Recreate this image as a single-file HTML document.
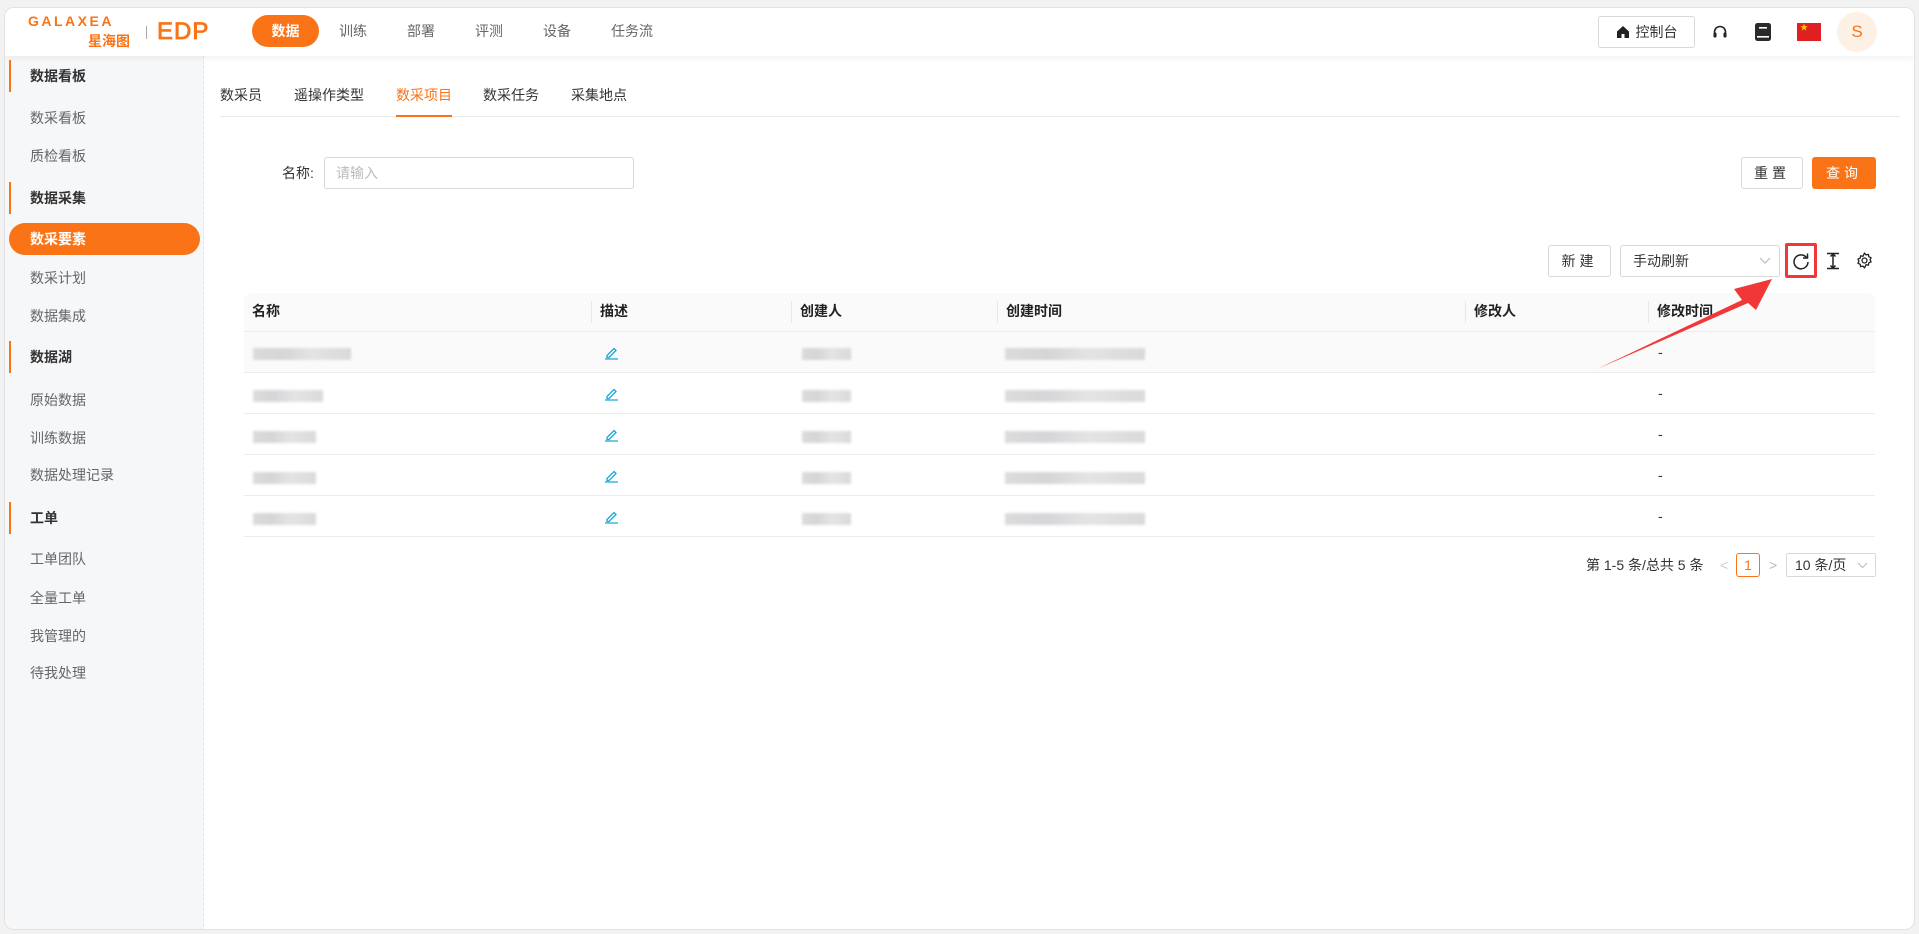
<!DOCTYPE html>
<html><head><meta charset="utf-8"><style>
*{box-sizing:border-box;margin:0;padding:0}
body{width:1919px;height:934px;background:#f2f2f2;font-family:"Liberation Sans","Noto Sans CJK SC",sans-serif;font-size:14px;color:#333;position:relative;overflow:hidden}
.abs{position:absolute}
.card{position:absolute;left:4px;top:7px;width:1911px;height:923px;background:#fff;border-radius:10px;border:1px solid #e2e2e2;overflow:hidden}
.hdr{position:absolute;left:0;top:0;width:100%;height:48px;background:#fff;box-shadow:0 2px 6px rgba(0,0,0,.06);z-index:2}
.side{position:absolute;left:0;top:48px;width:199px;height:880px;background:#f6f7f9;border-right:1px dashed #e4e6ea}
.t{position:absolute;white-space:nowrap;line-height:20px}
.sec{font-weight:bold;color:#333}
.sec::before{content:"";position:absolute;left:-21px;top:-6px;width:2px;height:32px;background:#fa7317}
.it{color:#666}
.btn{position:absolute;border:1px solid #d9d9d9;border-radius:3px;background:#fff;text-align:center;color:#333;font-size:14px}
.th{position:absolute;font-weight:bold;color:#222;top:301px}
.blur{position:absolute;background:linear-gradient(90deg,#d6d6d8,#cfcfd2 30%,#e0e0e2 60%,#d4d4d6);filter:blur(1.2px);height:12px;opacity:.85}
.hl{position:absolute;height:1px;background:#ececec;left:244px;width:1631px}
.vd{position:absolute;width:1px;height:22px;background:#e8e8e8;top:301px}
</style></head><body>
<div class="card">
<div class="hdr">
 <div class="t" style="left:23px;top:3px;font-size:14px;font-weight:bold;color:#fa7317;letter-spacing:2.5px">GALAXEA</div>
 <div class="t" style="left:83px;top:25px;font-size:14px;font-weight:bold;color:#fa7317;line-height:16px">星海图</div>
 <div class="abs" style="left:141px;top:18px;width:1px;height:13px;background:#aaa"></div>
 <div class="t" style="left:152px;top:12px;font-size:24px;color:#fa7317;line-height:24px;letter-spacing:1px;-webkit-text-stroke:0.8px #fa7317">EDP</div>
 <div class="abs" style="left:247px;top:7px;width:67px;height:32px;border-radius:16px;background:#fa7317;color:#fff;text-align:center;line-height:32px;font-weight:bold">数据</div>
 <div class="t" style="left:334px;top:13px;color:#666">训练</div>
 <div class="t" style="left:402px;top:13px;color:#666">部署</div>
 <div class="t" style="left:470px;top:13px;color:#666">评测</div>
 <div class="t" style="left:538px;top:13px;color:#666">设备</div>
 <div class="t" style="left:606px;top:13px;color:#666">任务流</div>
 <div class="btn" style="left:1593px;top:8px;width:97px;height:32px;line-height:30px"><svg width="14" height="14" viewBox="0 0 14 14" style="vertical-align:-2px;margin-right:6px"><path d="M7 1L1 6.5V13H5.5V9H8.5V13H13V6.5Z" fill="#222"/></svg>控制台</div>
 <svg class="abs" style="left:1707px;top:16px" width="16" height="16" viewBox="0 0 16 16"><path d="M2.5 10V8a5.5 5.5 0 0 1 11 0v2" fill="none" stroke="#222" stroke-width="1.6"/><rect x="1.5" y="8.5" width="3" height="5" rx="1" fill="#222"/><rect x="11.5" y="8.5" width="3" height="5" rx="1" fill="#222"/></svg>
 <svg class="abs" style="left:1749px;top:14px" width="18" height="20" viewBox="0 0 18 20"><rect x="1" y="1" width="16" height="18" rx="2.5" fill="#2a2a2a"/><rect x="5" y="5" width="8" height="1.6" fill="#fff"/><rect x="3" y="14" width="12" height="1.6" fill="#fff"/></svg>
 <div class="abs" style="left:1792px;top:15px;width:24px;height:18px;background:#e02020"><div class="abs" style="left:3px;top:1px;color:#ffd200;font-size:8px;line-height:8px">★</div></div>
 <div class="abs" style="left:1832px;top:4px;width:40px;height:40px;border-radius:50%;background:#fdf0e4;color:#fa7317;text-align:center;line-height:40px;font-size:17px">S</div>
</div>
<div class="side">
 <div class="t sec" style="left:25px;top:10px">数据看板</div>
 <div class="t it" style="left:25px;top:52px">数采看板</div>
 <div class="t it" style="left:25px;top:90px">质检看板</div>
 <div class="t sec" style="left:25px;top:132px">数据采集</div>
 <div class="abs" style="left:4px;top:167px;width:191px;height:32px;border-radius:16px;background:#fa7317"></div>
 <div class="t" style="left:25px;top:173px;color:#fff;font-weight:bold">数采要素</div>
 <div class="t it" style="left:25px;top:212px">数采计划</div>
 <div class="t it" style="left:25px;top:250px">数据集成</div>
 <div class="t sec" style="left:25px;top:291px">数据湖</div>
 <div class="t it" style="left:25px;top:334px">原始数据</div>
 <div class="t it" style="left:25px;top:372px">训练数据</div>
 <div class="t it" style="left:25px;top:409px">数据处理记录</div>
 <div class="t sec" style="left:25px;top:452px">工单</div>
 <div class="t it" style="left:25px;top:493px">工单团队</div>
 <div class="t it" style="left:25px;top:532px">全量工单</div>
 <div class="t it" style="left:25px;top:570px">我管理的</div>
 <div class="t it" style="left:25px;top:607px">待我处理</div>
</div>
</div>
<!-- tabs -->
<div class="t" style="left:220px;top:85px">数采员</div>
<div class="t" style="left:294px;top:85px">遥操作类型</div>
<div class="t" style="left:396px;top:85px;color:#fa7317">数采项目</div>
<div class="t" style="left:483px;top:85px">数采任务</div>
<div class="t" style="left:571px;top:85px">采集地点</div>
<div class="abs" style="left:220px;top:116px;width:1680px;height:1px;background:#eaeaea"></div>
<div class="abs" style="left:396px;top:115px;width:56px;height:2px;background:#fa7317"></div>
<!-- search -->
<div class="t" style="left:282px;top:163px">名称:</div>
<div class="abs" style="left:324px;top:157px;width:310px;height:32px;border:1px solid #d9d9d9;border-radius:3px;color:#bbb;padding-left:11px;line-height:30px">请输入</div>
<div class="btn" style="left:1741px;top:157px;width:62px;height:32px;line-height:30px;letter-spacing:4px">重置</div>
<div class="abs" style="left:1812px;top:157px;width:64px;height:32px;border-radius:3px;background:#fa7317;color:#fff;text-align:center;line-height:32px;letter-spacing:4px">查询</div>
<!-- toolbar -->
<div class="btn" style="left:1548px;top:245px;width:63px;height:32px;line-height:30px;letter-spacing:4px">新建</div>
<div class="btn" style="left:1620px;top:245px;width:160px;height:32px;line-height:30px;text-align:left;padding-left:12px">手动刷新<svg class="abs" style="left:138px;top:11px" width="12" height="8" viewBox="0 0 12 8"><path d="M1 1l5 5 5-5" fill="none" stroke="#bbb" stroke-width="1.2"/></svg></div>
<div class="abs" style="left:1785px;top:243px;width:32px;height:35px;border:3px solid #f03838;border-radius:2px"></div>
<svg class="abs" style="left:1792px;top:252px" width="18" height="18" viewBox="0 0 18 18"><path d="M14.5 5.5A7 7 0 1 0 16 10" fill="none" stroke="#222" stroke-width="1.5"/><path d="M15.5 1.5v4.5h-4.5" fill="none" stroke="#222" stroke-width="1.5"/></svg>
<svg class="abs" style="left:1826px;top:252px" width="14" height="18" viewBox="0 0 14 18"><path d="M1 1.5h12M1 16.5h12M7 2v14M4.5 4.5L7 2l2.5 2.5M4.5 13.5L7 16l2.5-2.5" fill="none" stroke="#222" stroke-width="1.5"/></svg>
<svg class="abs" style="left:1856px;top:252px" width="17" height="17" viewBox="0 0 24 24"><path d="M12 1.5l2.2 2.6 3.3-.8.6 3.4 3.2 1.3-1.5 3 1.5 3-3.2 1.3-.6 3.4-3.3-.8L12 22.5l-2.2-2.6-3.3.8-.6-3.4L2.7 16l1.5-3-1.5-3 3.2-1.3.6-3.4 3.3.8z" fill="none" stroke="#222" stroke-width="1.8" stroke-linejoin="round"/><circle cx="12" cy="12" r="3.5" fill="none" stroke="#222" stroke-width="1.8"/></svg>
<!-- table -->
<div class="abs" style="left:244px;top:293px;width:1631px;height:80px;background:#fafafa;border-radius:8px 8px 0 0"></div>
<div class="hl" style="top:331px"></div><div class="hl" style="top:372px"></div><div class="hl" style="top:413px"></div><div class="hl" style="top:454px"></div><div class="hl" style="top:495px"></div><div class="hl" style="top:536px"></div>
<div class="vd" style="left:591px"></div><div class="vd" style="left:791px"></div><div class="vd" style="left:997px"></div><div class="vd" style="left:1465px"></div><div class="vd" style="left:1648px"></div>
<div class="th" style="left:252px">名称</div><div class="th" style="left:600px">描述</div><div class="th" style="left:800px">创建人</div><div class="th" style="left:1006px">创建时间</div><div class="th" style="left:1474px">修改人</div><div class="th" style="left:1657px">修改时间</div>
<div class="blur" style="left:253px;top:348px;width:98px"></div>
<div class="blur" style="left:253px;top:390px;width:70px"></div>
<div class="blur" style="left:253px;top:431px;width:63px"></div>
<div class="blur" style="left:253px;top:472px;width:63px"></div>
<div class="blur" style="left:253px;top:513px;width:63px"></div>
<div class="blur" style="left:802px;top:348px;width:49px"></div><div class="blur" style="left:802px;top:390px;width:49px"></div><div class="blur" style="left:802px;top:431px;width:49px"></div><div class="blur" style="left:802px;top:472px;width:49px"></div><div class="blur" style="left:802px;top:513px;width:49px"></div>
<div class="blur" style="left:1005px;top:348px;width:140px"></div><div class="blur" style="left:1005px;top:390px;width:140px"></div><div class="blur" style="left:1005px;top:431px;width:140px"></div><div class="blur" style="left:1005px;top:472px;width:140px"></div><div class="blur" style="left:1005px;top:513px;width:140px"></div>
<svg class="abs" style="left:604px;top:345px" width="15" height="15" viewBox="0 0 15 15"><path d="M3 10.5l7-7 2 2-7 7H3z M1 14h13" fill="none" stroke="#1aa6d6" stroke-width="1.3"/></svg>
<svg class="abs" style="left:604px;top:386px" width="15" height="15" viewBox="0 0 15 15"><path d="M3 10.5l7-7 2 2-7 7H3z M1 14h13" fill="none" stroke="#1aa6d6" stroke-width="1.3"/></svg>
<svg class="abs" style="left:604px;top:427px" width="15" height="15" viewBox="0 0 15 15"><path d="M3 10.5l7-7 2 2-7 7H3z M1 14h13" fill="none" stroke="#1aa6d6" stroke-width="1.3"/></svg>
<svg class="abs" style="left:604px;top:468px" width="15" height="15" viewBox="0 0 15 15"><path d="M3 10.5l7-7 2 2-7 7H3z M1 14h13" fill="none" stroke="#1aa6d6" stroke-width="1.3"/></svg>
<svg class="abs" style="left:604px;top:509px" width="15" height="15" viewBox="0 0 15 15"><path d="M3 10.5l7-7 2 2-7 7H3z M1 14h13" fill="none" stroke="#1aa6d6" stroke-width="1.3"/></svg>
<div class="t" style="left:1658px;top:342px">-</div><div class="t" style="left:1658px;top:383px">-</div><div class="t" style="left:1658px;top:424px">-</div><div class="t" style="left:1658px;top:465px">-</div><div class="t" style="left:1658px;top:506px">-</div>
<!-- arrow -->
<svg class="abs" style="left:0;top:0" width="1919" height="934"><polygon points="1597,369 1742,300 1734,289 1772,279 1756,310 1748,303" fill="#f03838"/></svg>
<!-- pagination -->
<div class="t" style="left:1586px;top:555px">第 1-5 条/总共 5 条</div>
<div class="t" style="left:1720px;top:555px;color:#ccc">&lt;</div>
<div class="abs" style="left:1736px;top:553px;width:24px;height:24px;border:1px solid #fa7317;border-radius:3px;color:#fa7317;text-align:center;line-height:22px">1</div>
<div class="t" style="left:1769px;top:555px;color:#bbb">&gt;</div>
<div class="abs" style="left:1786px;top:553px;width:90px;height:24px;border:1px solid #d9d9d9;border-radius:2px;line-height:22px;padding-left:8px">10 条/页<svg class="abs" style="left:70px;top:8px" width="11" height="7" viewBox="0 0 11 7"><path d="M1 1l4.5 4.5L10 1" fill="none" stroke="#bbb" stroke-width="1.1"/></svg></div>
</body></html>
